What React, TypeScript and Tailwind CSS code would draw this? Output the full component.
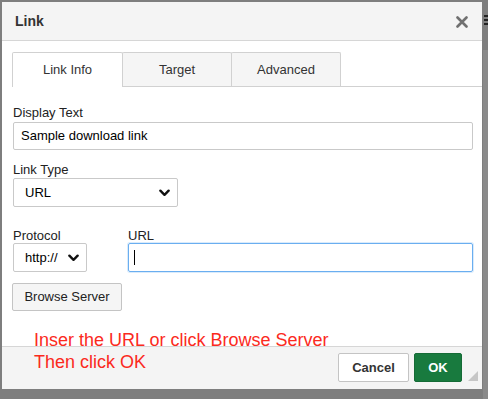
import React from "react";

function Chevron({ className }: { className?: string }) {
  return (
    <svg viewBox="0 0 12 8" className={className} fill="none">
      <polyline points="1.5,1.5 6,6 10.5,1.5" stroke="#111" strokeWidth="2.6" strokeLinecap="round" strokeLinejoin="round" />
    </svg>
  );
}

function FakeSelect({ value, width }: { value: string; width: string }) {
  return (
    <div
      className={`${width} h-[29px] flex items-center justify-between pl-[11px] pr-[7px] border border-[#c9c9c9] rounded-[2px] bg-white text-[13px] text-black`}
    >
      <span>{value}</span>
      <Chevron className="w-[11px] h-[8px]" />
    </div>
  );
}

export default function App() {
  const tabs = ["Link Info", "Target", "Advanced"];
  return (
    <div
      className="w-[488px] h-[399px] bg-[#7e7e7e] pt-[2px] pl-[2px] overflow-hidden relative"
      style={{ fontFamily: '"Liberation Sans", Arial, sans-serif' }}
    >
      <div className="w-[480px] h-[387px] bg-white flex flex-col relative">
        {/* header */}
        <div className="h-[39px] shrink-0 bg-[#f4f4f4] border-b border-[#d6d6d6] flex items-center justify-between pl-[13px] pr-[14px]">
          <span className="text-[14px] font-bold text-[#333] mt-[1px]">Link</span>
          <svg viewBox="0 0 12 12" className="w-[12px] h-[12px] mt-[1px]">
            <path d="M1.5 1.5 L10.5 10.5 M10.5 1.5 L1.5 10.5" stroke="#707070" strokeWidth="2.6" strokeLinecap="round" />
          </svg>
        </div>

        {/* body */}
        <div className="flex-1 flex flex-col">
          <div className="mt-[11px] ml-[10px] flex border-b border-[#d1d1d1] h-[35px]">
            {tabs.map((t, i) => (
              <div
                key={t}
                className={
                  i === 0
                    ? "w-[111px] h-[35px] -mb-px bg-white border border-b-0 border-[#d1d1d1] rounded-t-[2px] flex items-center justify-center text-[13px] text-[#333]"
                    : "w-[110px] h-[34px] -ml-px bg-[#f5f5f5] border border-b-0 border-[#d1d1d1] rounded-t-[2px] flex items-center justify-center text-[13px] text-[#333]"
                }
              >
                {t}
              </div>
            ))}
          </div>

          <div className="pl-[11px] pr-[9px] pt-[18px] text-[13px] text-[#222]">
            <div className="leading-[16px] mb-[1px]">Display Text</div>
            <div className="h-[28px] border border-[#c9c9c9] rounded-[2px] flex items-center pl-[7px] text-black">
              Sample download link
            </div>

            <div className="leading-[16px] mt-[12px]">Link Type</div>
            <FakeSelect value="URL" width="w-[165px]" />

            <div className="flex gap-[42px] mt-[21px]">
              <div className="flex flex-col">
                <div className="leading-[15px]">Protocol</div>
                <FakeSelect value="http://" width="w-[74px]" />
              </div>
              <div className="flex flex-col flex-1 -ml-px">
                <div className="leading-[15px]">URL</div>
                <div className="h-[29px] border border-[#6aaef0] rounded-[2px] flex items-center pl-[5px] shadow-[0_0_0_1px_rgba(106,174,240,0.25)]">
                  <span className="w-px h-[15px] bg-black" />
                </div>
              </div>
            </div>

            <button className="mt-[11px] -ml-px w-[110px] h-[28px] bg-[#f5f5f5] border border-[#c4c4c4] rounded-[2px] text-[13px] text-[#222] flex items-center justify-center">
              Browse Server
            </button>
          </div>
        </div>

        {/* footer */}
        <div className="h-[43px] shrink-0 bg-[#f4f4f4] border-t border-[#d6d6d6] flex items-start justify-end gap-[5px] pr-[20px] pt-[6px] relative">
          <button className="w-[71px] h-[29px] bg-white border border-[#c4c4c4] rounded-[2px] text-[13px] font-bold text-[#333]">
            Cancel
          </button>
          <button className="w-[48px] h-[29px] bg-[#187a3e] border border-[#156b36] rounded-[2px] text-[13px] font-bold text-white">
            OK
          </button>
          <svg viewBox="0 0 10 10" className="absolute right-[4px] bottom-[8px] w-[10px] h-[10px]">
            <polygon points="10,0 10,10 0,10" fill="#c6c6c6" />
          </svg>
        </div>

        {/* annotation */}
        <div className="absolute left-[32px] top-[327px] text-[18px] leading-[22px] text-[#fb2a1d]">
          <div>Inser the URL or click Browse Server</div>
          <div>Then click OK</div>
        </div>
      </div>

      {/* background fragments at the right edge */}
      <div className="absolute left-[484px] top-[15px] w-[6px] flex flex-col gap-[2px]">
        <div className="h-[2px] bg-[#222]" />
        <div className="h-[2px] bg-[#222]" />
        <div className="h-[2px] bg-[#222]" />
      </div>
      <div className="absolute left-[483px] top-[50px] w-[5px] h-[349px] bg-[#8a8a8a]" />
    </div>
  );
}
